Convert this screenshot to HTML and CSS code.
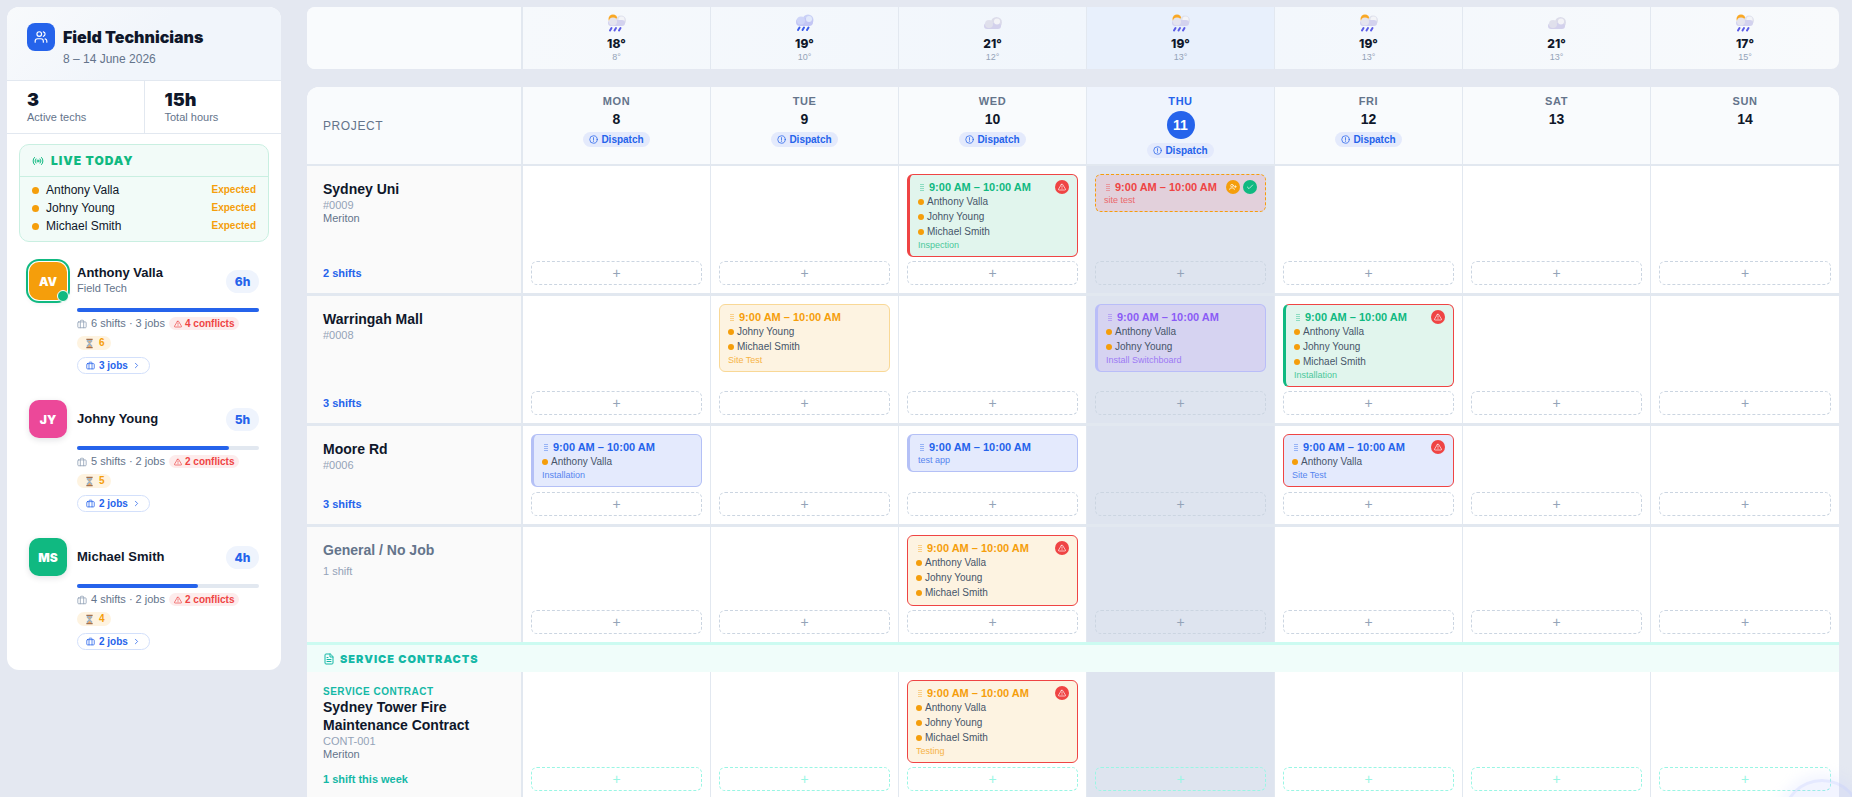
FILE: index.html
```
<!DOCTYPE html>
<html lang="en">

<head>
  <meta charset="UTF-8">
  <meta name="viewport" content="width=device-width, initial-scale=1.0">
  <title>Field Technicians</title>
  <link rel="stylesheet" href="styles.css">
</head>

<body>
  <!-- Icon sprite -->
  <svg class="sprite" aria-hidden="true">
    <symbol id="i-users" viewBox="0 0 24 24">
      <path d="M16 21v-2a4 4 0 0 0-4-4H6a4 4 0 0 0-4 4v2" />
      <circle cx="9" cy="7" r="4" />
      <path d="M22 21v-2a4 4 0 0 0-3-3.87M16 3.13a4 4 0 0 1 0 7.75" />
    </symbol>
    <symbol id="i-live" viewBox="0 0 24 24">
      <circle cx="12" cy="12" r="2" />
      <path d="M7.8 16.2a6 6 0 0 1 0-8.4M16.2 7.8a6 6 0 0 1 0 8.4M4.9 19.1a10 10 0 0 1 0-14.2M19.1 4.9a10 10 0 0 1 0 14.2" />
    </symbol>
    <symbol id="i-case" viewBox="0 0 24 24">
      <rect x="2" y="7" width="20" height="14" rx="2" />
      <path d="M16 21V5a2 2 0 0 0-2-2h-4a2 2 0 0 0-2 2v16" />
    </symbol>
    <symbol id="i-alert" viewBox="0 0 24 24">
      <path d="M10.3 3.9 1.8 18a2 2 0 0 0 1.7 3h17a2 2 0 0 0 1.7-3L13.7 3.9a2 2 0 0 0-3.4 0zM12 9v4M12 17v.1" />
    </symbol>
    <symbol id="i-chevron" viewBox="0 0 24 24">
      <path d="m9 18 6-6-6-6" />
    </symbol>
    <symbol id="i-info" viewBox="0 0 24 24">
      <circle cx="12" cy="12" r="10" />
      <path d="M12 7v6M12 16v1" />
    </symbol>
    <symbol id="i-check" viewBox="0 0 24 24">
      <path d="M20 6 9 17l-5-5" />
    </symbol>
    <symbol id="i-user-plus" viewBox="0 0 24 24">
      <path d="M16 20v-1a4 4 0 0 0-4-4H6a4 4 0 0 0-4 4v1M19 8v6M16 11h6" />
      <circle cx="9" cy="8" r="4" />
    </symbol>
    <symbol id="i-file" viewBox="0 0 24 24">
      <path d="M14 2H6a2 2 0 0 0-2 2v16a2 2 0 0 0 2 2h12a2 2 0 0 0 2-2V8zM14 2v6h6M8 13h8M8 17h8M8 9h2" />
    </symbol>
    <symbol id="i-grip" viewBox="0 0 7 8">
      <path d="M2 1.5h4M2 3.5h4M2 5.5h4M2 7.5h4" />
    </symbol>
    <symbol id="i-hourglass" viewBox="0 0 12 14">
      <path fill="#9db4c8" d="M2.5 2h7v2.5L7 7l2.500 2.500V12h-7V9.500L5 7 2.500 4.500z" />
      <path fill="#f0a860" d="M4 4h4L6 6.500zM3.500 11.500 6 8.500l2.500 3z" />
      <path fill="#a5714e" d="M2 1h8v1.500H2zM2 11.500h8V13H2z" />
    </symbol>
    <symbol id="w-sun-rain" viewBox="0 0 18 18">
      <circle cx="5" cy="5" r="4.500" fill="#f9a825" />
      <circle cx="13" cy="6.500" r="5" fill="#dfe1ec" />
      <circle cx="13.500" cy="5.500" r="3" fill="#f3f4f8" />
      <rect x="0" y="6" width="17" height="6" rx="3" fill="#d3d2ee" />
      <circle cx="5" cy="7.500" r="4" fill="#e4e4ee" />
      <path stroke="#5b5ce6" stroke-width="2" stroke-linecap="round" d="M3.500 14 2 16.500M8 14 6.500 16.500M12.500 14 11 16.500" />
    </symbol>
    <symbol id="w-rain" viewBox="0 0 18 18">
      <circle cx="12" cy="6" r="5.500" fill="#c9d0f6" />
      <rect x="0" y="4" width="17" height="8" rx="4" fill="#c3c6f4" />
      <circle cx="5" cy="6.500" r="4" fill="#cfd5f8" />
      <circle cx="13" cy="5" r="3" fill="#e2e9fb" />
      <path stroke="#3b5bea" stroke-width="2" stroke-linecap="round" d="M3.500 13.500 2 16M8 13.500 6.500 16M12.500 13.500 11 16" />
    </symbol>
    <symbol id="w-cloud" viewBox="0 0 18 18">
      <circle cx="12.500" cy="8.500" r="5.500" fill="#dcdcea" />
      <rect x="0" y="9" width="17" height="6" rx="3" fill="#d3d1ec" />
      <circle cx="5" cy="10" r="4" fill="#e0e0ec" />
      <circle cx="13" cy="7.500" r="3" fill="#f3f3f7" />
    </symbol>
  </svg>

  <div class="app">
    <aside class="sidebar">
      <header class="sidebar-header">
        <span class="logo"><svg class="icon"><use href="#i-users" /></svg></span>
        <div>
          <h1>Field Technicians</h1>
          <p>8 – 14 June 2026</p>
        </div>
      </header>
      <div class="stats">
        <div class="stat"><strong>3</strong><span>Active techs</span></div>
        <div class="stat"><strong>15h</strong><span>Total hours</span></div>
      </div>

      <section class="live">
        <h2><svg class="icon"><use href="#i-live" /></svg>LIVE TODAY</h2>
        <ul>
          <li><i class="dot"></i>Anthony Valla<b>Expected</b></li>
          <li><i class="dot"></i>Johny Young<b>Expected</b></li>
          <li><i class="dot"></i>Michael Smith<b>Expected</b></li>
        </ul>
      </section>

      <div class="tech-list">
        <article class="tech">
          <span class="avatar amber online">AV</span>
          <div class="tech-body">
            <div class="tech-head">
              <div class="tech-name"><h3>Anthony Valla</h3><p>Field Tech</p></div>
              <span class="hours">6h</span>
            </div>
            <div class="bar"><div class="bar-fill" style="width: 100%"></div></div>
            <div class="meta">
              <svg class="icon"><use href="#i-case" /></svg><span>6 shifts · 3 jobs</span>
              <span class="conflicts"><svg class="icon"><use href="#i-alert" /></svg>4 conflicts</span>
            </div>
            <span class="pending"><svg><use href="#i-hourglass" /></svg>6</span>
            <button class="jobs"><svg class="icon"><use href="#i-case" /></svg>3 jobs<svg class="icon chevron"><use href="#i-chevron" /></svg></button>
          </div>
        </article>
        <article class="tech">
          <span class="avatar pink">JY</span>
          <div class="tech-body">
            <div class="tech-head">
              <div class="tech-name"><h3>Johny Young</h3></div>
              <span class="hours">5h</span>
            </div>
            <div class="bar"><div class="bar-fill" style="width: 83.3%"></div></div>
            <div class="meta">
              <svg class="icon"><use href="#i-case" /></svg><span>5 shifts · 2 jobs</span>
              <span class="conflicts"><svg class="icon"><use href="#i-alert" /></svg>2 conflicts</span>
            </div>
            <span class="pending"><svg><use href="#i-hourglass" /></svg>5</span>
            <button class="jobs"><svg class="icon"><use href="#i-case" /></svg>2 jobs<svg class="icon chevron"><use href="#i-chevron" /></svg></button>
          </div>
        </article>
        <article class="tech">
          <span class="avatar green">MS</span>
          <div class="tech-body">
            <div class="tech-head">
              <div class="tech-name"><h3>Michael Smith</h3></div>
              <span class="hours">4h</span>
            </div>
            <div class="bar"><div class="bar-fill" style="width: 66.7%"></div></div>
            <div class="meta">
              <svg class="icon"><use href="#i-case" /></svg><span>4 shifts · 2 jobs</span>
              <span class="conflicts"><svg class="icon"><use href="#i-alert" /></svg>2 conflicts</span>
            </div>
            <span class="pending"><svg><use href="#i-hourglass" /></svg>4</span>
            <button class="jobs"><svg class="icon"><use href="#i-case" /></svg>2 jobs<svg class="icon chevron"><use href="#i-chevron" /></svg></button>
          </div>
        </article>
      </div>
    </aside>

    <main class="board">
      <div class="weather columns">
        <div class="weather-label"></div>
        <div class="weather-day"><svg><use href="#w-sun-rain" /></svg><strong>18°</strong><span>8°</span></div>
        <div class="weather-day"><svg><use href="#w-rain" /></svg><strong>19°</strong><span>10°</span></div>
        <div class="weather-day"><svg><use href="#w-cloud" /></svg><strong>21°</strong><span>12°</span></div>
        <div class="weather-day today"><svg><use href="#w-sun-rain" /></svg><strong>19°</strong><span>13°</span></div>
        <div class="weather-day"><svg><use href="#w-sun-rain" /></svg><strong>19°</strong><span>13°</span></div>
        <div class="weather-day"><svg><use href="#w-cloud" /></svg><strong>21°</strong><span>13°</span></div>
        <div class="weather-day"><svg><use href="#w-sun-rain" /></svg><strong>17°</strong><span>15°</span></div>
      </div>

      <table class="schedule">
        <thead>
          <tr class="columns">
            <th class="project-label">PROJECT</th>
            <th class="day"><span>MON</span><b>8</b><button class="dispatch"><svg class="icon"><use href="#i-info" /></svg>Dispatch</button></th>
            <th class="day"><span>TUE</span><b>9</b><button class="dispatch"><svg class="icon"><use href="#i-info" /></svg>Dispatch</button></th>
            <th class="day"><span>WED</span><b>10</b><button class="dispatch"><svg class="icon"><use href="#i-info" /></svg>Dispatch</button></th>
            <th class="day today"><span>THU</span><b>11</b><button class="dispatch"><svg class="icon"><use href="#i-info" /></svg>Dispatch</button></th>
            <th class="day"><span>FRI</span><b>12</b><button class="dispatch"><svg class="icon"><use href="#i-info" /></svg>Dispatch</button></th>
            <th class="day"><span>SAT</span><b>13</b></th>
            <th class="day"><span>SUN</span><b>14</b></th>
          </tr>
        </thead>
        <tbody>
          <tr class="columns">
            <th class="project">
              <h3>Sydney Uni</h3>
              <span class="code">#0009</span>
              <span class="client">Meriton</span>
              <span class="count">2 shifts</span>
            </th>
            <td><button class="add">+</button></td>
            <td><button class="add">+</button></td>
            <td>
              <div class="shift green conflict marked">
                <div class="time"><svg class="grip"><use href="#i-grip" /></svg>9:00 AM – 10:00 AM<span class="badges"><i class="badge red"><svg class="icon"><use href="#i-alert" /></svg></i></span></div>
                <div class="person"><i class="dot"></i>Anthony Valla</div>
                <div class="person"><i class="dot"></i>Johny Young</div>
                <div class="person"><i class="dot"></i>Michael Smith</div>
                <div class="note">Inspection</div>
              </div>
              <button class="add">+</button>
            </td>
            <td class="today">
              <div class="shift open">
                <div class="time"><svg class="grip"><use href="#i-grip" /></svg>9:00 AM – 10:00 AM<span class="badges"><i class="badge amber"><svg class="icon"><use href="#i-user-plus" /></svg></i><i class="badge ok"><svg class="icon"><use href="#i-check" /></svg></i></span></div>
                <div class="note">site test</div>
              </div>
              <button class="add">+</button>
            </td>
            <td><button class="add">+</button></td>
            <td><button class="add">+</button></td>
            <td><button class="add">+</button></td>
          </tr>
          <tr class="columns">
            <th class="project">
              <h3>Warringah Mall</h3>
              <span class="code">#0008</span>
              <span class="count">3 shifts</span>
            </th>
            <td><button class="add">+</button></td>
            <td>
              <div class="shift orange">
                <div class="time"><svg class="grip"><use href="#i-grip" /></svg>9:00 AM – 10:00 AM</div>
                <div class="person"><i class="dot"></i>Johny Young</div>
                <div class="person"><i class="dot"></i>Michael Smith</div>
                <div class="note">Site Test</div>
              </div>
              <button class="add">+</button>
            </td>
            <td><button class="add">+</button></td>
            <td class="today">
              <div class="shift purple marked">
                <div class="time"><svg class="grip"><use href="#i-grip" /></svg>9:00 AM – 10:00 AM</div>
                <div class="person"><i class="dot"></i>Anthony Valla</div>
                <div class="person"><i class="dot"></i>Johny Young</div>
                <div class="note">Install Switchboard</div>
              </div>
              <button class="add">+</button>
            </td>
            <td>
              <div class="shift green conflict marked confirmed">
                <div class="time"><svg class="grip"><use href="#i-grip" /></svg>9:00 AM – 10:00 AM<span class="badges"><i class="badge red"><svg class="icon"><use href="#i-alert" /></svg></i></span></div>
                <div class="person"><i class="dot"></i>Anthony Valla</div>
                <div class="person"><i class="dot"></i>Johny Young</div>
                <div class="person"><i class="dot"></i>Michael Smith</div>
                <div class="note">Installation</div>
              </div>
              <button class="add">+</button>
            </td>
            <td><button class="add">+</button></td>
            <td><button class="add">+</button></td>
          </tr>
          <tr class="columns">
            <th class="project">
              <h3>Moore Rd</h3>
              <span class="code">#0006</span>
              <span class="count">3 shifts</span>
            </th>
            <td>
              <div class="shift blue marked">
                <div class="time"><svg class="grip"><use href="#i-grip" /></svg>9:00 AM – 10:00 AM</div>
                <div class="person"><i class="dot"></i>Anthony Valla</div>
                <div class="note">Installation</div>
              </div>
              <button class="add">+</button>
            </td>
            <td><button class="add">+</button></td>
            <td>
              <div class="shift blue marked">
                <div class="time"><svg class="grip"><use href="#i-grip" /></svg>9:00 AM – 10:00 AM</div>
                <div class="note">test app</div>
              </div>
              <button class="add">+</button>
            </td>
            <td class="today"><button class="add">+</button></td>
            <td>
              <div class="shift blue conflict">
                <div class="time"><svg class="grip"><use href="#i-grip" /></svg>9:00 AM – 10:00 AM<span class="badges"><i class="badge red"><svg class="icon"><use href="#i-alert" /></svg></i></span></div>
                <div class="person"><i class="dot"></i>Anthony Valla</div>
                <div class="note">Site Test</div>
              </div>
              <button class="add">+</button>
            </td>
            <td><button class="add">+</button></td>
            <td><button class="add">+</button></td>
          </tr>
          <tr class="columns">
            <th class="project general">
              <h3>General / No Job</h3>
              <span class="muted">1 shift</span>
            </th>
            <td><button class="add">+</button></td>
            <td><button class="add">+</button></td>
            <td>
              <div class="shift orange conflict">
                <div class="time"><svg class="grip"><use href="#i-grip" /></svg>9:00 AM – 10:00 AM<span class="badges"><i class="badge red"><svg class="icon"><use href="#i-alert" /></svg></i></span></div>
                <div class="person"><i class="dot"></i>Anthony Valla</div>
                <div class="person"><i class="dot"></i>Johny Young</div>
                <div class="person"><i class="dot"></i>Michael Smith</div>
              </div>
              <button class="add">+</button>
            </td>
            <td class="today"><button class="add">+</button></td>
            <td><button class="add">+</button></td>
            <td><button class="add">+</button></td>
            <td><button class="add">+</button></td>
          </tr>
        </tbody>
        <tbody class="contracts">
          <tr class="section">
            <th colspan="8"><svg class="icon"><use href="#i-file" /></svg>SERVICE CONTRACTS</th>
          </tr>
          <tr class="columns">
            <th class="project">
              <span class="kind">SERVICE CONTRACT</span>
              <h3>Sydney Tower Fire Maintenance Contract</h3>
              <span class="code">CONT-001</span>
              <span class="client">Meriton</span>
              <span class="count">1 shift this week</span>
            </th>
            <td><button class="add">+</button></td>
            <td><button class="add">+</button></td>
            <td>
              <div class="shift orange conflict">
                <div class="time"><svg class="grip"><use href="#i-grip" /></svg>9:00 AM – 10:00 AM<span class="badges"><i class="badge red"><svg class="icon"><use href="#i-alert" /></svg></i></span></div>
                <div class="person"><i class="dot"></i>Anthony Valla</div>
                <div class="person"><i class="dot"></i>Johny Young</div>
                <div class="person"><i class="dot"></i>Michael Smith</div>
                <div class="note">Testing</div>
              </div>
              <button class="add">+</button>
            </td>
            <td class="today"><button class="add">+</button></td>
            <td><button class="add">+</button></td>
            <td><button class="add">+</button></td>
            <td><button class="add">+</button></td>
          </tr>
        </tbody>
      </table>
    </main>
  </div>

  <div class="pulse"></div>
</body>

</html>
```
FILE: styles.css
```
* {
  box-sizing: border-box;
}

body {
  margin: 0;
  background: #e4e8f1;
  color: #0f172a;
  font-family: "Liberation Sans", Arial, sans-serif;
  font-size: 12px;
}

h1,
h2,
h3,
p,
ul {
  margin: 0;
  padding: 0;
}

button {
  font-family: inherit;
  cursor: pointer;
}

.sprite {
  display: none;
}

.icon {
  flex: none;
  width: 12px;
  height: 12px;
  fill: none;
  stroke: currentColor;
  stroke-width: 2;
  stroke-linecap: round;
  stroke-linejoin: round;
}

.dot {
  flex: none;
  width: 6px;
  height: 6px;
  border-radius: 50%;
  background: #f59e0b;
}

.app {
  display: flex;
  align-items: flex-start;
  gap: 26px;
  height: 100vh;
  padding: 7px 13px 0 7px;
  overflow: hidden;
}

/* Sidebar */
.sidebar {
  flex: none;
  width: 274px;
  border-radius: 12px;
  background: #fff;
  overflow: hidden;
}

.sidebar-header {
  display: flex;
  gap: 8px;
  padding: 16px 20px 12px;
  border-bottom: 1px solid #e2e8f0;
  background: linear-gradient(135deg, #f8fafc, #f1f5fb 50%);
}

.logo {
  display: flex;
  align-items: center;
  justify-content: center;
  width: 28px;
  height: 28px;
  border-radius: 8px;
  background: #2563eb;
  color: #fff;
}

.logo .icon {
  width: 14px;
  height: 14px;
}

.sidebar-header h1 {
  font-family: Inter, "Arial Black", sans-serif;
  font-size: 16px;
  font-weight: 900;
  line-height: 28px;
}

.sidebar-header p {
  line-height: 17px;
  color: #64748b;
}

.stats {
  display: flex;
  border-bottom: 1px solid #e2e8f0;
}

.stat {
  flex: 1;
  padding: 9px 20px;
}

.stat:first-child {
  border-right: 1px solid #e2e8f0;
}

.stat strong {
  display: block;
  font-family: Inter, "Arial Black", sans-serif;
  font-size: 18px;
  font-weight: 900;
  line-height: 20px;
}

.stat span {
  display: block;
  font-size: 11px;
  line-height: 14px;
  color: #64748b;
}

.live {
  margin: 10px 12px 0;
  border: 1px solid #c9efe1;
  border-radius: 10px;
  background: #f2fbf8;
}

.live h2 {
  display: flex;
  align-items: center;
  gap: 7px;
  height: 32px;
  padding: 0 12px;
  border-bottom: 1px solid #c9efe1;
  font-family: Inter, "Arial Black", sans-serif;
  font-size: 12px;
  font-weight: 900;
  letter-spacing: 1px;
  color: #10b981;
}

.live ul {
  padding: 4px 12px 6px;
  list-style: none;
}

.live li {
  display: flex;
  align-items: center;
  line-height: 18px;
}

.live .dot {
  width: 7px;
  height: 7px;
  margin-right: 7px;
}

.live b {
  margin-left: auto;
  font-size: 10px;
  color: #f59e0b;
}

.tech-list {
  padding: 8px 22px 6px;
}

.tech {
  display: flex;
  gap: 10px;
  padding: 12px 0 14px;
}

.avatar {
  position: relative;
  flex: none;
  display: flex;
  align-items: center;
  justify-content: center;
  width: 38px;
  height: 38px;
  border-radius: 10px;
  box-shadow: 0 2px 6px rgba(15, 23, 42, 0.12);
  font-family: Inter, "Arial Black", sans-serif;
  font-size: 12px;
  font-weight: 900;
  color: #fff;
}

.avatar.amber {
  background: #f59e0b;
}

.avatar.pink {
  background: #ec4899;
}

.avatar.green {
  background: #10b981;
}

.avatar.online {
  box-shadow: 0 0 0 1px #fff, 0 0 0 3px #10b981, 0 2px 6px rgba(15, 23, 42, 0.12);
}

.avatar.online::after {
  content: "";
  position: absolute;
  right: -2px;
  bottom: -2px;
  width: 10px;
  height: 10px;
  border: 1px solid #fff;
  border-radius: 50%;
  background: #10b981;
}

.tech-body {
  flex: 1;
  min-width: 0;
  display: flex;
  flex-direction: column;
  align-items: flex-start;
}

.tech-head {
  display: flex;
  align-items: center;
  justify-content: space-between;
  width: 100%;
  height: 38px;
}

.tech-name {
  padding-bottom: 2px;
}

.tech-name h3 {
  font-size: 13px;
  line-height: 17px;
}

.tech-name p {
  font-size: 11px;
  line-height: 15px;
  color: #64748b;
}

.hours {
  min-width: 33px;
  border-radius: 12px;
  background: #eff4fd;
  font-family: Inter, "Arial Black", sans-serif;
  font-size: 12px;
  font-weight: 800;
  line-height: 23px;
  text-align: center;
  color: #2563eb;
}

.bar {
  width: 100%;
  height: 4px;
  margin-top: 8px;
  border-radius: 2px;
  background: #e2e8f0;
}

.bar-fill {
  height: 100%;
  border-radius: 2px;
  background: #2563eb;
}

.meta {
  display: flex;
  align-items: center;
  gap: 4px;
  margin-top: 5px;
  font-size: 11px;
  line-height: 13px;
  color: #64748b;
  white-space: nowrap;
}

.meta > .icon {
  width: 10px;
  height: 10px;
  color: #94a3b8;
}

.conflicts {
  display: flex;
  align-items: center;
  gap: 3px;
  padding: 0 5px;
  border-radius: 7px;
  background: #fdecec;
  font-size: 10px;
  font-weight: bold;
  color: #ef4444;
}

.conflicts .icon {
  width: 8px;
  height: 8px;
}

.pending {
  display: flex;
  align-items: center;
  gap: 3px;
  margin-top: 6px;
  padding: 0 6px;
  border-radius: 7px;
  background: #fef3e0;
  font-size: 10px;
  font-weight: bold;
  line-height: 14px;
  color: #f59e0b;
}

.pending svg {
  width: 13px;
  height: 11px;
}

.jobs {
  display: flex;
  align-items: center;
  gap: 4px;
  height: 17px;
  margin-top: 7px;
  padding: 0 8px;
  border: 1px solid #d3e0fb;
  border-radius: 9px;
  background: #fff;
  font-size: 10px;
  font-weight: bold;
  color: #2563eb;
}

.jobs .icon {
  width: 9px;
  height: 9px;
}

/* Board */
.board {
  flex: 1;
  min-width: 0;
}

.columns {
  display: grid;
  grid-template-columns: 216px repeat(7, minmax(0, 1fr));
}

.weather {
  margin-bottom: 18px;
  border-radius: 8px;
  background: linear-gradient(90deg, #f8fafc, #f1f6fc 50%, #f8fafc);
  overflow: hidden;
}

.weather-label {
  border-right: 2px solid #e2e8f0;
  background: #f9fbfd;
}

.weather-day {
  display: flex;
  flex-direction: column;
  align-items: center;
  height: 62px;
  padding-top: 7px;
  border-right: 1px solid #e2e8f0;
}

.weather-day:last-child {
  border-right: none;
}

.weather-day.today {
  background: #e8f0fc;
}

.weather-day svg {
  width: 18px;
  height: 18px;
}

.weather-day strong {
  margin-top: 4px;
  font-family: Inter, "Arial Black", sans-serif;
  font-size: 12px;
  font-weight: 800;
  line-height: 15px;
}

.weather-day span {
  font-size: 9px;
  line-height: 13px;
  color: #94a3b8;
}

.schedule,
.schedule thead,
.schedule tbody {
  display: block;
}

.schedule {
  border-radius: 12px 12px 0 0;
  background: #fff;
  overflow: hidden;
}

.schedule thead {
  border-bottom: 2px solid #e2e8f0;
  background: #f9fbfd;
}

.schedule th {
  padding: 0;
  font-weight: normal;
  text-align: left;
}

.schedule .project-label {
  display: flex;
  align-items: center;
  padding: 0 16px;
  border-right: 2px solid #e2e8f0;
  font-size: 12px;
  letter-spacing: 0.05em;
  color: #64748b;
}

.schedule .day {
  display: flex;
  flex-direction: column;
  align-items: center;
  padding: 7px 0 6px;
  border-right: 1px solid #e2e8f0;
}

.schedule .day:last-child {
  border-right: none;
}

.day span {
  font-size: 11px;
  font-weight: bold;
  line-height: 14px;
  letter-spacing: 0.05em;
  color: #64748b;
}

.day b {
  margin: 3px 0 4px;
  font-size: 14px;
  line-height: 17px;
}

.day.today {
  background: #eff4fd;
}

.day.today span {
  color: #2563eb;
}

.day.today b {
  width: 28px;
  border-radius: 50%;
  background: #2563eb;
  line-height: 28px;
  text-align: center;
  color: #fff;
}

.dispatch {
  display: flex;
  align-items: center;
  gap: 3px;
  height: 15px;
  padding: 0 6px;
  border: none;
  border-radius: 8px;
  background: #e4eafc;
  font-size: 10px;
  font-weight: bold;
  color: #2563eb;
}

.dispatch .icon {
  width: 9px;
  height: 9px;
}

.schedule tbody tr.columns + tr.columns {
  border-top: 3px solid #e2e8f0;
}

.schedule .project {
  display: flex;
  flex-direction: column;
  padding: 14px 16px 13px;
  border-right: 2px solid #e2e8f0;
  background: #fafafa;
}

.project h3 {
  font-size: 14px;
  line-height: 18px;
}

.code {
  font-size: 11px;
  line-height: 14px;
  color: #94a3b8;
}

.client {
  font-size: 11px;
  line-height: 13px;
  color: #64748b;
}

.count {
  margin-top: auto;
  font-size: 11px;
  font-weight: bold;
  line-height: 14px;
  color: #2563eb;
}

.general h3 {
  color: #64748b;
}

.muted {
  margin-top: 5px;
  font-size: 11px;
  line-height: 14px;
  color: #94a3b8;
}

.kind {
  font-size: 10px;
  font-weight: bold;
  line-height: 12px;
  letter-spacing: 0.05em;
  color: #14b8a6;
}

.schedule td {
  display: flex;
  flex-direction: column;
  justify-content: space-between;
  gap: 4px;
  min-height: 98px;
  padding: 8px;
  border-right: 1px solid #e2e8f0;
}

.schedule td:last-child {
  border-right: none;
}

.schedule td.today {
  background: #dee4ef;
}

.add {
  width: 100%;
  height: 24px;
  margin-top: auto;
  padding: 0;
  border: 1px dashed #cbd5e1;
  border-radius: 6px;
  background: none;
  font-size: 14px;
  line-height: 20px;
  color: #94a3b8;
}

/* Shift cards */
.shift {
  padding: 5px 8px;
  border: 1px solid;
  border-radius: 6px;
}

.time {
  display: flex;
  align-items: center;
  height: 14px;
  font-size: 11px;
  font-weight: bold;
  white-space: nowrap;
}

.grip {
  flex: none;
  width: 7px;
  height: 8px;
  margin-right: 4px;
  stroke: currentColor;
  stroke-width: 1;
  opacity: 0.4;
}

.person {
  display: flex;
  align-items: center;
  gap: 3px;
  font-size: 10px;
  line-height: 15px;
  color: #475569;
}

.note {
  font-size: 9px;
  line-height: 12px;
  opacity: 0.75;
}

.badges {
  display: flex;
  gap: 3px;
  margin-left: auto;
}

.badge {
  display: flex;
  align-items: center;
  justify-content: center;
  width: 14px;
  height: 14px;
  border-radius: 50%;
  color: #fff;
}

.badge .icon {
  width: 8px;
  height: 8px;
}

.badge.red {
  background: #ef4444;
}

.badge.amber {
  background: #f59e0b;
}

.badge.ok {
  background: #10b981;
}

.shift.green {
  border-color: #a7e5cd;
  background: #e1f5ed;
  color: #10b981;
}

.shift.orange {
  border-color: #f9d896;
  background: #fdf3e1;
  color: #f59e0b;
}

.shift.blue {
  border-color: #b4c0f6;
  background: #e4eafd;
  color: #2563eb;
}

.shift.purple {
  border-color: #b9bdf8;
  background: #d6d3f1;
  color: #8b5cf6;
}

.shift.open {
  border: 1px dashed #f59e0b;
  background: #e2d0db;
  color: #ef4444;
}

.shift.marked {
  border-left-width: 3px;
}

.shift.conflict {
  border-color: #ef4444;
}

.shift.confirmed {
  border-left-color: #10b981;
}

/* Service contracts */
.section {
  display: block;
}

.schedule .section th {
  display: flex;
  align-items: center;
  gap: 5px;
  height: 30px;
  padding: 0 16px;
  border-top: 3px solid #ccfbf1;
  background: #f0fdfa;
  font-family: Inter, "Arial Black", sans-serif;
  font-size: 11px;
  font-weight: 900;
  letter-spacing: 1px;
  color: #14b8a6;
}

.contracts .count {
  color: #14b8a6;
}

.contracts .add {
  border-color: #99f6e4;
  color: #99f6e4;
}

.pulse {
  position: fixed;
  right: -10px;
  bottom: -62px;
  width: 80px;
  height: 80px;
  border: 3px solid rgba(199, 210, 254, 0.3);
  border-radius: 50%;
  background: rgba(165, 180, 252, 0.15);
  box-shadow: 0 0 12px 6px rgba(199, 210, 254, 0.2);
}
```
